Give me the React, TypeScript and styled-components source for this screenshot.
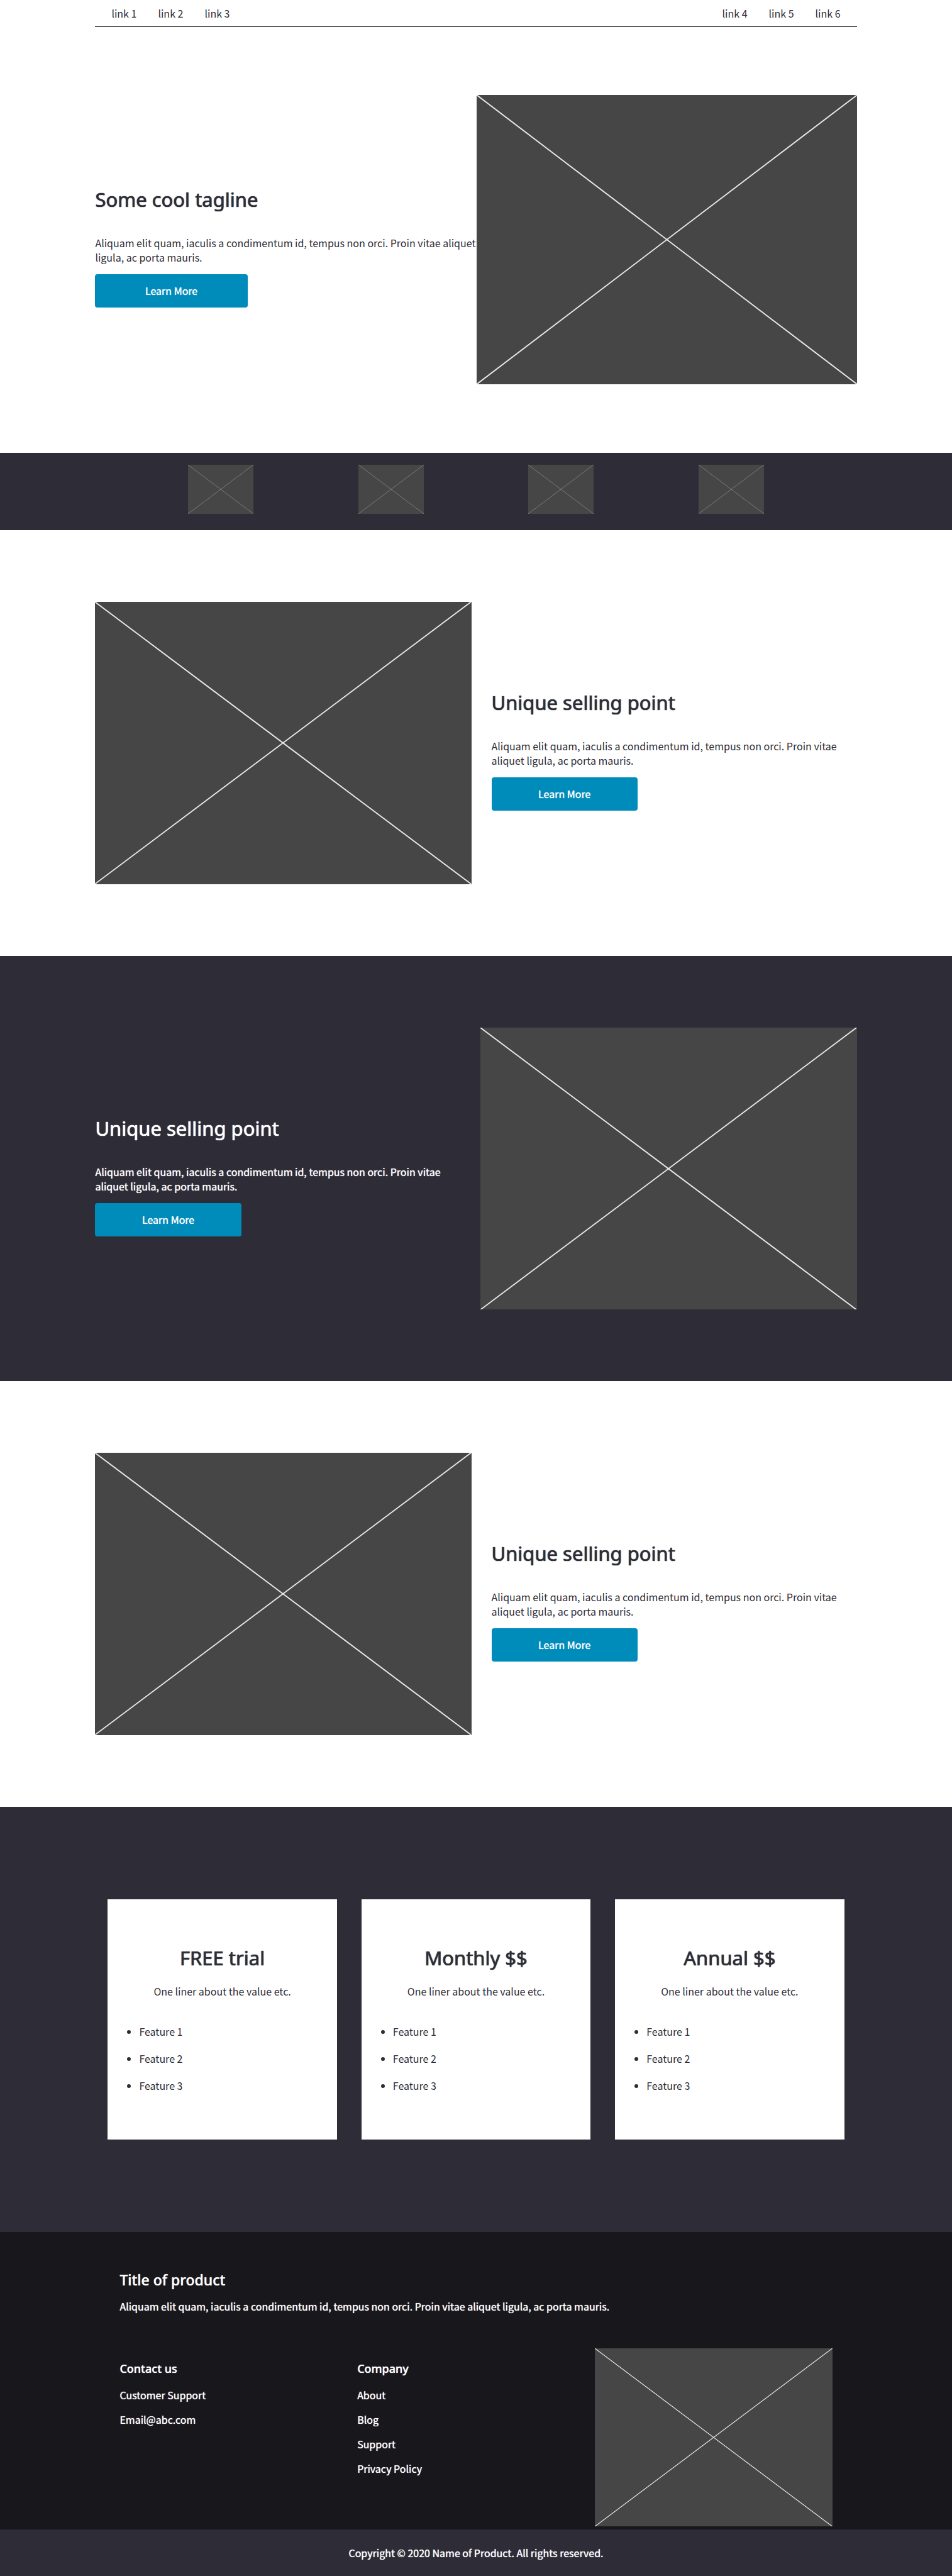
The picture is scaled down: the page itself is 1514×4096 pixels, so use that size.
import React from 'react';
import styled, { createGlobalStyle } from 'styled-components';

const colors = {
  ink: '#2e2d37',
  footer: '#18171b',
  paper: '#ffffff',
  accent: '#008cbb',
  placeholder: '#464646',
};

const bodyFont = '"Noto Sans CJK SC", "Noto Sans", sans-serif';
const headingFont = '"Noto Sans", "Open Sans", sans-serif';

const GlobalStyle = createGlobalStyle`
  * { box-sizing: border-box; }
  body {
    margin: 0;
    background: ${colors.paper};
    color: ${colors.ink};
    font-family: ${bodyFont};
    font-size: 16px;
    line-height: 23px;
  }
  h1, h2, h3, p, ul { margin: 0; padding: 0; }
  a { color: inherit; text-decoration: none; }
`;

const Container = styled.div`
  width: 80%;
  margin: 0 auto;
`;

const NavBar = styled(Container).attrs({ as: 'nav' })`
  display: flex;
  justify-content: space-between;
  padding: 10px 26px 9px;
  border-bottom: 1px solid #000;
`;

const NavGroup = styled.div`
  display: flex;
  gap: 34px;
`;

const Band = styled.section<{ $dark?: boolean }>`
  background: ${(p) => (p.$dark ? colors.ink : colors.paper)};
  color: ${(p) => (p.$dark ? colors.paper : colors.ink)};
  text-shadow: ${(p) => (p.$dark ? '0 0 1px currentColor' : 'none')};
`;

const HeroRow = styled(Container)`
  display: grid;
  grid-template-columns: 606fr 605fr;
  align-items: center;
  padding: 108px 0 109px;
`;

const FeatureRow = styled(Container)<{ $imageFirst: boolean }>`
  display: grid;
  grid-template-columns: ${(p) => (p.$imageFirst ? '598fr 581fr' : '581fr 598fr')};
  gap: 32px;
  align-items: center;
  padding: 114px 0;
`;

const Picture = styled.svg<{ $ratio?: string }>`
  display: block;
  width: 100%;
  aspect-ratio: ${(p) => p.$ratio ?? '4 / 3'};
  background: ${colors.placeholder};
`;

const Copy = styled.div`
  display: flex;
  flex-direction: column;
  align-items: flex-start;
  padding-top: 23px;
`;

const Title = styled.h2`
  font-family: ${headingFont};
  font-size: 31px;
  font-weight: 400;
  line-height: 42px;
  text-shadow: 0 0 1px currentColor, 0 0 1px currentColor;
`;

const Lead = styled.p`
  margin: 37px 0 15px;
`;

const Button = styled.button`
  width: 40%;
  height: 53px;
  border: 0;
  border-radius: 4px;
  background: ${colors.accent};
  color: ${colors.paper};
  font: inherit;
  text-shadow: 0 0 1px currentColor;
  cursor: pointer;
`;

const LogoRow = styled(Container)`
  display: grid;
  grid-template-columns: repeat(4, 1fr);
  justify-items: center;
  padding: 19px 64px 26px;
`;

const Logo = styled.div`
  width: 104px;
`;

const PlanRow = styled(Container)`
  display: grid;
  grid-template-columns: repeat(3, 1fr);
  gap: 39px;
  padding: 147px 20px;
`;

const Plan = styled.article`
  padding: 72px 20px 74px;
  background: ${colors.paper};
  color: ${colors.ink};
  text-align: center;
  text-shadow: none;
`;

const PlanNote = styled.p`
  margin: 21px 0 41px;
`;

const FeatureList = styled.ul`
  display: flex;
  flex-direction: column;
  gap: 20px;
  padding-left: 30px;
  text-align: left;
`;

const FooterBand = styled.footer`
  background: ${colors.footer};
  color: ${colors.paper};
  text-shadow: 0 0 1px currentColor;
`;

const FooterInner = styled(Container)`
  padding: 61px 39px 5px;
`;

const FooterTitle = styled.h2`
  margin-bottom: 15px;
  font-family: ${headingFont};
  font-size: 23px;
  font-weight: 500;
  line-height: 31px;
`;

const FooterColumns = styled.div`
  display: grid;
  grid-template-columns: repeat(3, 1fr);
  margin-top: 55px;
`;

const FooterColumn = styled.div`
  display: flex;
  flex-direction: column;
  align-items: flex-start;
  gap: 16px;
  padding-top: 20px;
`;

const FooterHeading = styled.h3`
  margin-bottom: 2px;
  font-family: ${headingFont};
  font-size: 18px;
  font-weight: 500;
  line-height: 25px;
`;

const Copyright = styled.p`
  && { padding: 26px 0 25px; }
  background: ${colors.ink};
  color: ${colors.paper};
  text-align: center;
`;

const lorem =
  'Aliquam elit quam, iaculis a condimentum id, tempus non orci. Proin vitae aliquet ligula, ac porta mauris.';

function Placeholder({ ratio }: { ratio?: string }) {
  return (
    <Picture $ratio={ratio} viewBox="0 0 800 600" preserveAspectRatio="none" role="img" aria-label="Placeholder">
      <path d="M0 0L800 600M800 0L0 600" stroke="#e8e8e8" strokeWidth="2.5" fill="none" />
    </Picture>
  );
}

function Pitch({ title, main }: { title: string; main?: boolean }) {
  return (
    <Copy>
      <Title as={main ? 'h1' : 'h2'}>{title}</Title>
      <Lead>{lorem}</Lead>
      <Button type="button">Learn More</Button>
    </Copy>
  );
}

function Feature({ dark = false }: { dark?: boolean }) {
  return (
    <Band $dark={dark}>
      <FeatureRow $imageFirst={!dark}>
        {!dark && <Placeholder />}
        <Pitch title="Unique selling point" />
        {dark && <Placeholder />}
      </FeatureRow>
    </Band>
  );
}

function Links({ items }: { items: string[] }) {
  return (
    <>
      {items.map((item) => (
        <a key={item} href="#">{item}</a>
      ))}
    </>
  );
}

export default function App() {
  return (
    <>
      <GlobalStyle />
      <NavBar>
        <NavGroup><Links items={['link 1', 'link 2', 'link 3']} /></NavGroup>
        <NavGroup><Links items={['link 4', 'link 5', 'link 6']} /></NavGroup>
      </NavBar>
      <Band>
        <HeroRow>
          <Pitch title="Some cool tagline" main />
          <Placeholder ratio="605 / 460" />
        </HeroRow>
      </Band>
      <Band $dark>
        <LogoRow>
          {[1, 2, 3, 4].map((n) => (
            <Logo key={n}><Placeholder /></Logo>
          ))}
        </LogoRow>
      </Band>
      <Feature />
      <Feature dark />
      <Feature />
      <Band $dark>
        <PlanRow>
          {['FREE trial', 'Monthly $$', 'Annual $$'].map((plan) => (
            <Plan key={plan}>
              <Title>{plan}</Title>
              <PlanNote>One liner about the value etc.</PlanNote>
              <FeatureList>
                <li>Feature 1</li>
                <li>Feature 2</li>
                <li>Feature 3</li>
              </FeatureList>
            </Plan>
          ))}
        </PlanRow>
      </Band>
      <FooterBand>
        <FooterInner>
          <FooterTitle>Title of product</FooterTitle>
          <p>{lorem}</p>
          <FooterColumns>
            <FooterColumn>
              <FooterHeading>Contact us</FooterHeading>
              <Links items={['Customer Support', 'Email@abc.com']} />
            </FooterColumn>
            <FooterColumn>
              <FooterHeading>Company</FooterHeading>
              <Links items={['About', 'Blog', 'Support', 'Privacy Policy']} />
            </FooterColumn>
            <Placeholder />
          </FooterColumns>
        </FooterInner>
        <Copyright>Copyright © 2020 Name of Product. All rights reserved.</Copyright>
      </FooterBand>
    </>
  );
}
